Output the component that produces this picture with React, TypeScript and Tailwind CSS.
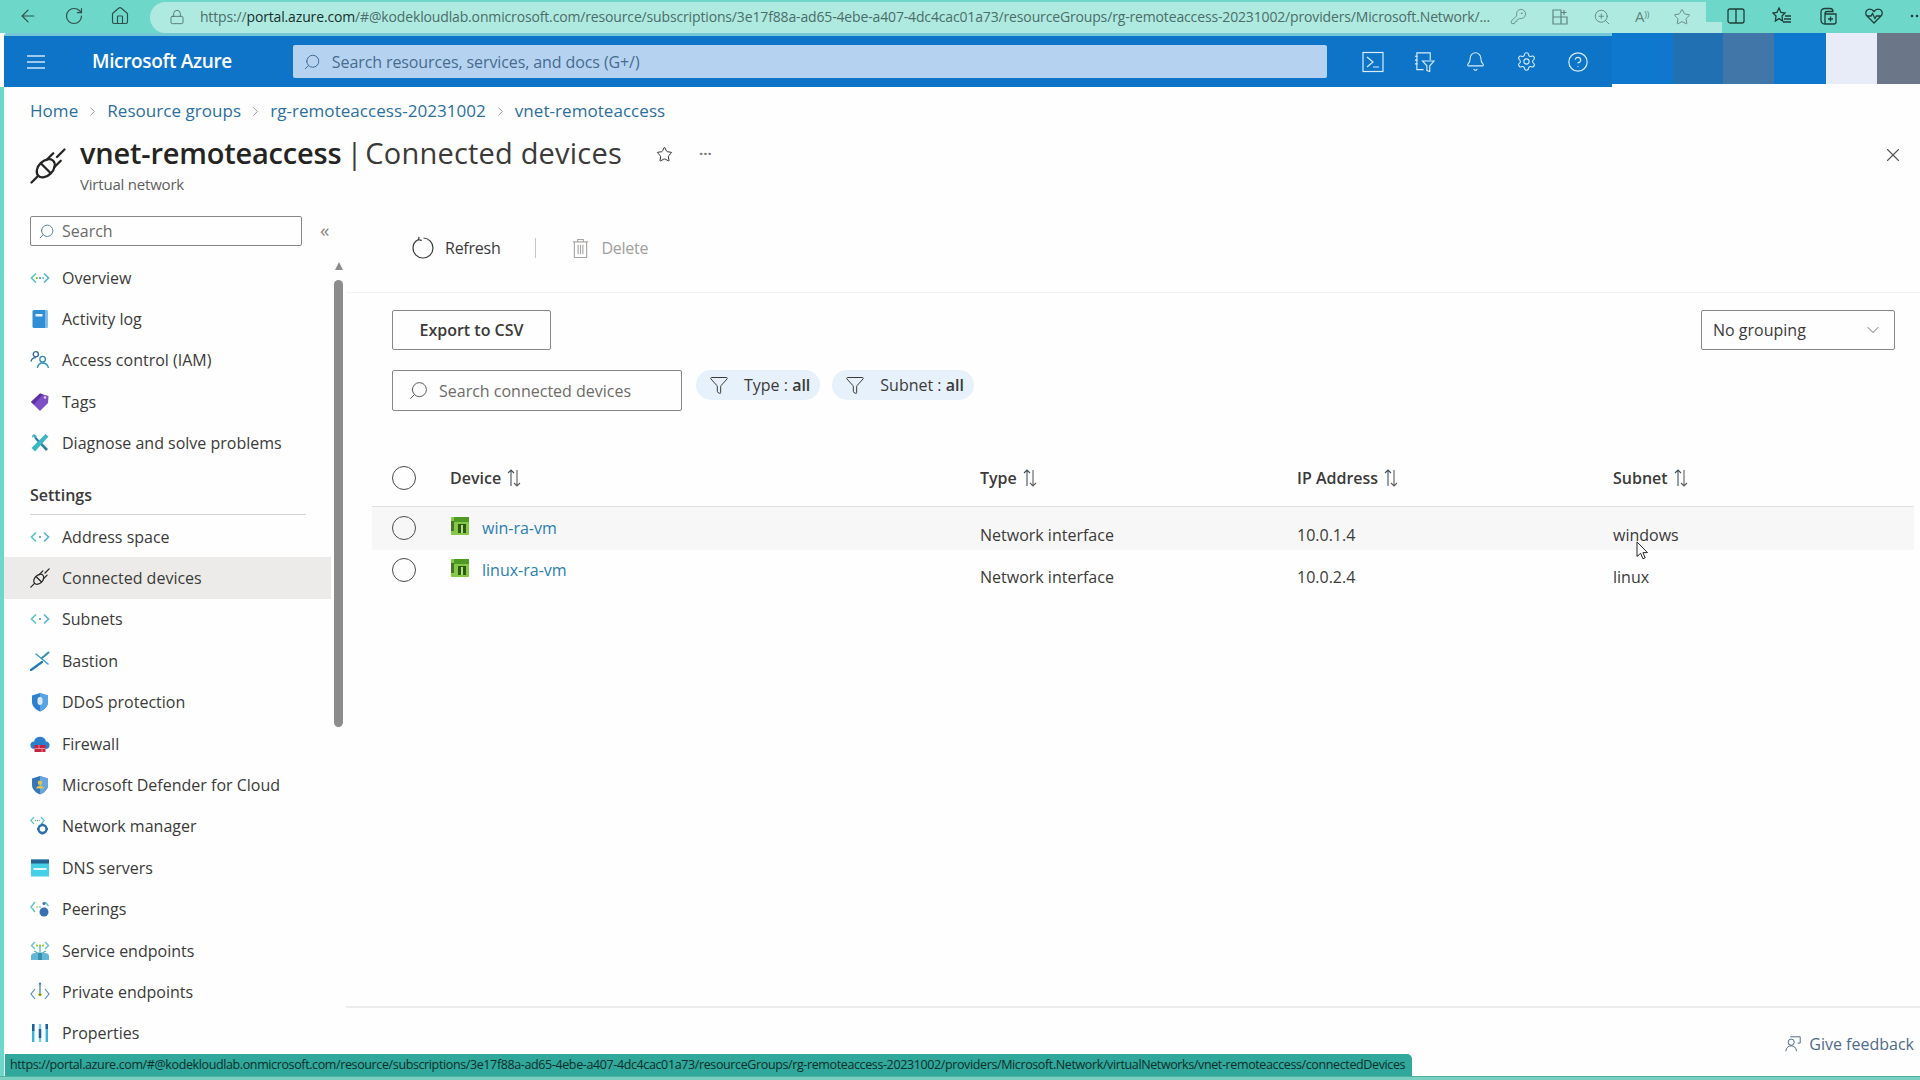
import React from "react";
import { ArrowLeft, RotateCw, Home, Lock, ChevronRight, X, ChevronDown, Star, ZoomIn, KeyRound, Bell, Settings, CircleHelp, Search, Funnel } from "lucide-react";

const Code = ({ dots = "three" }: { dots?: string }) => (
  <svg viewBox="0 0 20 20" className="w-[20px] h-[20px]">
    <path d="M6 5.500 1.500 10 6 14.500" fill="none" stroke="#5cc6c4" strokeWidth="1.700" />
    <path d="M14 5.500 18.500 10 14 14.500" fill="none" stroke="#5bb0d0" strokeWidth="1.700" />
    {dots === "three" && <circle cx="6.800" cy="10" r="1" fill="#7fba00" />}
    <circle cx="10" cy="10" r="1" fill="#3999c6" />
    {dots === "three" && <circle cx="13.200" cy="10" r="1" fill="#5cc6c4" />}
  </svg>
);
const Plug = ({ s = 20, w = 1.5 }: { s?: number; w?: number }) => (
  <svg viewBox="0 0 24 24" width={s} height={s} fill="none" stroke="#252423" strokeWidth={w} strokeLinecap="round">
    <path d="M1 23 5.500 18.500" />
    <ellipse cx="10.500" cy="13.500" rx="7" ry="4.800" transform="rotate(-45 10.500 13.500)" />
    <path d="M7.500 10.500 13.500 16.500" />
    <path d="M11 8 15.500 3.500M16 13 20.500 8.500" />
    <path d="M18 6 23 1" />
  </svg>
);
const Book = () => (
  <svg viewBox="0 0 20 20" className="w-[20px] h-[20px]">
    <rect x="2.500" y="1" width="15" height="18" rx="1.500" fill="#2f8fd5" />
    <rect x="15" y="1" width="2.500" height="18" fill="#7fb8e6" />
    <rect x="5.500" y="5" width="7" height="2.500" fill="#e8f3fb" />
  </svg>
);
const People = () => (
  <svg viewBox="0 0 20 20" className="w-[20px] h-[20px]" fill="none" strokeWidth="1.300">
    <circle cx="5.800" cy="4.200" r="2.600" stroke="#32659c" />
    <path d="M1 11.500C1.600 8.600 3.400 7.600 5.800 7.600" stroke="#32659c" />
    <circle cx="12.600" cy="9.200" r="2.800" stroke="#2f8fb5" />
    <path d="M7.400 18C8 14.600 10 13 12.600 13 15.200 13 17.600 14.600 18.500 18" stroke="#2f8fb5" />
  </svg>
);
const Tag = () => (
  <svg viewBox="0 0 20 20" className="w-[20px] h-[20px]">
    <path d="M1 10 10 1.500 18.500 4 18 11 10 19Z" fill="#7d4fc4" />
    <path d="M1 10 10 1.500 13 2.300 4 12.500Z" fill="#5e2ea3" />
    <circle cx="15" cy="5.500" r="1.200" fill="#e5d8f5" />
  </svg>
);
const Tools = () => (
  <svg viewBox="0 0 20 20" className="w-[20px] h-[20px]">
    <path d="M2 5C1.400 3 3 1 5 1.400L7 3.400 5 5.400 3 3.400Z" fill="#46b2c9" />
    <path d="M4.500 5.500 6 4 18 16 16 18Z" fill="#2d7f98" />
    <path d="M15.500 1 18.500 3.500 5 18.500 1.500 15Z" fill="#39b7c7" />
  </svg>
);
const Bastion = () => (
  <svg viewBox="0 0 20 20" className="w-[20px] h-[20px]" fill="none" strokeLinecap="round">
    <path d="M1 19 12 11" stroke="#2678b8" strokeWidth="2.200" />
    <path d="M6 3 18 13" stroke="#3d9fc7" strokeWidth="1.500" />
    <path d="M12 7 18.500 1.500" stroke="#2f8fb5" strokeWidth="2" />
  </svg>
);
const Shield = ({ inner = "#dceaf7" }: { inner?: string }) => (
  <svg viewBox="0 0 20 20" className="w-[20px] h-[20px]">
    <path d="M10 1 18 3.500V10C18 14.500 14 17.800 10 19.500 6 17.800 2 14.500 2 10V3.500Z" fill="#2e7fd0" />
    <path d="M10 1 18 3.500V10C18 14.500 14 17.800 10 19.500Z" fill="#59a5e4" />
    <rect x="7.500" y="5" width="5" height="8" rx="2.400" fill={inner} />
  </svg>
);
const Firewall = () => (
  <svg viewBox="0 0 20 20" className="w-[20px] h-[20px]">
    <path d="M4.500 15C2 15 .4 13.300 .4 11.200 .4 9.200 2 7.700 4 7.600 4.600 4.600 7 2.800 10 2.800 13 2.800 15.400 4.600 16 7.600 18 7.700 19.600 9.200 19.600 11.200 19.600 13.300 18 15 15.500 15Z" fill="#2c7fca" />
    <rect x="4.500" y="11" width="11" height="7" fill="#c4243f" />
    <path d="M4.500 14.500H15.500M9 11V14.500M12 14.500V18" stroke="#f2b8c1" strokeWidth=".7" />
  </svg>
);
const Defender = () => (
  <svg viewBox="0 0 20 20" className="w-[20px] h-[20px]">
    <path d="M10 1 18 3.500V10C18 14.500 14 17.800 10 19.500 6 17.800 2 14.500 2 10V3.500Z" fill="#3476b8" />
    <path d="M10 1 18 3.500V10C18 14.500 14 17.800 10 19.500Z" fill="#6aa6dc" />
    <circle cx="10" cy="7.800" r="2.200" fill="#e2c54d" />
    <path d="M6 13.500C6.600 11.400 8.200 10.500 10 10.500 11.800 10.500 13.400 11.400 14 13.500Z" fill="#e2c54d" />
  </svg>
);
const NetMgr = () => (
  <svg viewBox="0 0 20 20" className="w-[20px] h-[20px]">
    <path d="M4 1 .8 4.500 4 8M11 1 14.200 4.500 11 8" fill="none" stroke="#5cc6c4" strokeWidth="1.200" />
    <circle cx="5.500" cy="4.500" r=".7" fill="#7fba00" /><circle cx="7.500" cy="4.500" r=".7" fill="#3999c6" /><circle cx="9.500" cy="4.500" r=".7" fill="#5cc6c4" />
    <circle cx="12.500" cy="13" r="4" fill="none" stroke="#2c6fb5" strokeWidth="2.400" />
    <path d="M12.500 7.400V9M12.500 17V18.600M7 13H8.500M16.500 13H18" stroke="#2c6fb5" strokeWidth="2" />
  </svg>
);
const Dns = () => (
  <svg viewBox="0 0 20 20" className="w-[20px] h-[20px]">
    <rect x="1" y="1.500" width="18" height="17" fill="#45d0e6" />
    <rect x="1" y="1.500" width="18" height="4" fill="#25618f" />
    <rect x="3.500" y="10" width="13" height="2" fill="#e2f8fc" />
  </svg>
);
const Peer = () => (
  <svg viewBox="0 0 20 20" className="w-[20px] h-[20px]">
    <path d="M5 3 1 8 5 13M15 3 18.500 7" fill="none" stroke="#5cc6c4" strokeWidth="1.400" />
    <circle cx="7" cy="8" r=".8" fill="#7fba00" /><circle cx="10" cy="8" r=".8" fill="#3999c6" />
    <circle cx="14" cy="13" r="4.500" fill="#3a6fb0" />
    <circle cx="14" cy="4.500" r="1.500" fill="#3a6fb0" />
  </svg>
);
const Service = () => (
  <svg viewBox="0 0 20 20" className="w-[20px] h-[20px]">
    <path d="M5 1 1.500 4.500 5 8M15 1 18.500 4.500 15 8" fill="none" stroke="#5cc6c4" strokeWidth="1.300" />
    <circle cx="7" cy="4.500" r=".9" fill="#7fba00" /><circle cx="10" cy="4.500" r=".9" fill="#7fba00" /><circle cx="13" cy="4.500" r=".9" fill="#7fba00" />
    <path d="M10 5V12M4 10 10 13 16 10" fill="none" stroke="#4ab5bd" strokeWidth="1.300" />
    <path d="M1 15C1 13 3 12 5 12H15C17 12 19 13 19 15V19H1Z" fill="#62b6d6" />
    <rect x="8" y="12" width="4" height="7" fill="#3a8fb0" />
  </svg>
);
const Private = () => (
  <svg viewBox="0 0 20 20" className="w-[20px] h-[20px]">
    <path d="M5 7 1 12 5 17M15 7 19 12 15 17" fill="none" stroke="#4f8fb8" strokeWidth="1.200" />
    <path d="M10 2V11" stroke="#4f7fa8" strokeWidth="1.300" />
    <circle cx="10" cy="1.800" r="1.200" fill="#4f7fa8" />
    <circle cx="10" cy="12.500" r="1.600" fill="#7fa200" />
  </svg>
);
const Props = () => (
  <svg viewBox="0 0 20 20" className="w-[20px] h-[20px]">
    <rect x="2" y="1" width="2.400" height="18" fill="#37b5d8" />
    <rect x="2" y="1" width="2.400" height="7" fill="#1f5f9a" />
    <rect x="8.800" y="1" width="2.400" height="18" fill="#7cc8e4" />
    <rect x="8.800" y="6" width="2.400" height="9" fill="#1f5f9a" />
    <rect x="15.600" y="1" width="2.400" height="18" fill="#37b5d8" />
    <rect x="15.600" y="1" width="2.400" height="5" fill="#1f5f9a" />
  </svg>
);
const Vm = () => (
  <svg viewBox="0 0 20 20" className="w-[20px] h-[20px] -mt-[4px]">
    <rect x="1" y="1" width="18" height="18" rx="1" fill="#84c846" />
    <rect x="4" y="1" width="15" height="5" fill="#4f9a22" />
    <rect x="1" y="5" width="3" height="10" fill="#4a7528" />
    <rect x="8" y="8" width="8" height="9" fill="#2b5a12" />
    <rect x="11" y="9" width="2" height="8" fill="#b4e07c" />
  </svg>
);
const Sort = () => (
  <svg viewBox="0 0 14 18" className="w-[14px] h-[18px] ml-[6px]" fill="none" strokeWidth="1.100">
    <path d="M4 17V1M1 4 4 1 7 4" stroke="#43505c" />
    <path d="M10 1V17M7 14 10 17 13 14" stroke="#605e5c" />
  </svg>
);
const Ring = () => <span className="block w-[24px] h-[24px] rounded-full border-[1.5px] border-[#4a4a4a]" />;

const NavItem = ({ icon, label, active }: { icon: React.ReactNode; label: string; active?: boolean }) => (
  <div className={`flex h-[41.4px] items-center pl-[26px] gap-[12px] text-[16px] text-[#3b3a39] ${active ? "bg-[#edebe9]" : ""}`}>
    <span className="w-[20px] h-[20px] flex items-center justify-center shrink-0">{icon}</span>
    <span>{label}</span>
  </div>
);

const Crumb = ({ children }: { children: React.ReactNode }) => <span className="text-[#2a6f9e]">{children}</span>;
const Sep = () => <ChevronRight className="w-[15px] h-[15px] mx-[7px] text-[#777]" strokeWidth={1.2} />;

const Chip = ({ label }: { label: string }) => (
  <div className="h-[30px] rounded-full bg-[#e6f1fb] flex items-center pl-[13px] pr-[10px] text-[16px] text-[#3b3a39]">
    <Funnel className="w-[20px] h-[20px] mr-[15px] text-[#3b3a39]" strokeWidth={1.2} />
    <span>{label} : <span className="font-semibold">all</span></span>
  </div>
);

const Row = ({ name, ip, sub, hover }: { name: string; ip: string; sub: string; hover?: boolean }) => (
  <div className={`grid grid-cols-[58px_530px_317px_316px_1fr] pl-[20px] pb-[2px] items-center text-[16px] text-[#3b3a39] ${hover ? "bg-[#f7f7f7] h-[43px]" : "h-[41px]"}`}>
    <Ring />
    <div className="flex items-center gap-[12px]"><Vm /><span className="text-[#2a7fb0]">{name}</span></div>
    <div className="pt-[14px]">Network interface</div>
    <div className="pt-[14px]">{ip}</div>
    <div className="pt-[14px]">{sub}</div>
  </div>
);

export default function App() {
  const tip = "https://portal.azure.com/#@kodekloudlab.onmicrosoft.com/resource/subscriptions/3e17f88a-ad65-4ebe-a407-4dc4cac01a73/resourceGroups/rg-remoteaccess-20231002/providers/Microsoft.Network/virtualNetworks/vnet-remoteaccess/connectedDevices";
  return (
    <div className="relative w-[1920px] h-[1080px] overflow-hidden flex flex-col bg-[#6dd8c9] font-['Open_Sans',sans-serif]">
      {/* browser chrome */}
      <div className="h-[33px] flex shrink-0 items-end text-[#2f4f4a]">
        <div className="w-[150px] h-[33px] flex items-center pl-[18px] gap-[26px] pb-[2px]">
          <ArrowLeft className="w-[20px] h-[20px]" strokeWidth={1.4} />
          <RotateCw className="w-[20px] h-[20px]" strokeWidth={1.4} />
          <Home className="w-[20px] h-[20px]" strokeWidth={1.4} />
        </div>
        <div className="w-[1557px] h-[31px] rounded-l-full rounded-tr-[24px] bg-[#aeeae0] flex items-center pl-[19px] pb-[2px] text-[14px] text-[#4c6d68] tracking-[-0.15px]">
          <Lock className="w-[16px] h-[16px] mr-[15px]" strokeWidth={1.3} />
          <span className="w-[1295px] whitespace-nowrap overflow-hidden">https://<span className="text-[#16302c]">portal.azure.com</span>/#@kodekloudlab.onmicrosoft.com/resource/subscriptions/3e17f88a-ad65-4ebe-a407-4dc4cac01a73/resourceGroups/rg-remoteaccess-20231002/providers/Microsoft.Network/...</span>
          <div className="flex items-center gap-[24px] ml-[15px] text-[#5f8580]">
            <KeyRound className="w-[17px] h-[17px]" strokeWidth={1.2} />
            <svg viewBox="0 0 18 18" className="w-[18px] h-[18px]" fill="none" stroke="currentColor" strokeWidth="1.200"><path d="M2 2H10V16H2ZM2 9H16V16H10M13 2V7M10.500 4.500H15.500" /></svg>
            <ZoomIn className="w-[18px] h-[18px]" strokeWidth={1.2} />
            <span className="text-[15px] leading-none">A<sup className="text-[9px]">))</sup></span>
            <Star className="w-[18px] h-[18px]" strokeWidth={1.2} />
          </div>
        </div>
        <div className="w-[16px] h-[11px] bg-[#aeeae0]" />
        <div className="flex-1 h-[33px] flex items-center pl-[4px] gap-[26px] pb-[2px] text-[#1f3d39]">
          <svg viewBox="0 0 20 20" className="w-[20px] h-[20px] shrink-0" fill="none" stroke="currentColor" strokeWidth="1.300"><rect x="2" y="3" width="16" height="14" rx="2" /><path d="M10 3V17" /></svg>
          <svg viewBox="0 0 20 20" className="w-[20px] h-[20px] shrink-0" fill="none" stroke="currentColor" strokeWidth="1.300"><path d="M7 2 9 6.500 13 7 10 10 10.600 15 7 12.600 3.400 15 4 10 1 7 5 6.500ZM13 10H19M12 13H19M11 16H19" /></svg>
          <svg viewBox="0 0 20 20" className="w-[20px] h-[20px] shrink-0" fill="none" stroke="currentColor" strokeWidth="1.300"><path d="M7 18C4 18 3 16 3 14V6C3 4 4.500 2.500 7 2.500H12C14 2.500 15 4 15 5.500H9C7 5.500 7 7 7 8V18H16C17 18 18 17 18 16V8H7M12.500 10.500V15.500M10 13H15" /></svg>
          <svg viewBox="0 0 20 20" className="w-[20px] h-[20px] shrink-0" fill="none" stroke="currentColor" strokeWidth="1.300"><path d="M10 17 3 10C1 8 1.500 4.500 4 3.500 6.500 2.500 8.500 3.500 10 5.500 11.500 3.500 13.500 2.500 16 3.500 18.500 4.500 19 8 17 10ZM3 10H7L8.500 7.500 11 12.500 12.500 10H17" /></svg>
          <svg viewBox="0 0 10 4" className="w-[10px] h-[4px] shrink-0" fill="currentColor"><circle cx="2" cy="2" r="1.300" /><circle cx="7" cy="2" r="1.300" /></svg>
        </div>
      </div>

      {/* portal */}
      <div className="flex-1 min-h-0 ml-[4px] flex flex-col bg-[#fefefe]">
        <div className="h-[54px] flex shrink-0 bg-[#fefefe] -ml-[4px] items-start">
          <div className="ml-[4px] w-[1608px] h-[54px] bg-[#0e74c8] border-t-[3px] border-[#74c8d6] flex items-center text-white rounded-tl-[3px]">
            <svg viewBox="0 0 20 16" className="w-[20px] h-[16px] ml-[22px]" fill="none" stroke="#cfe5f7" strokeWidth="1.400"><path d="M1 2H19M1 8H19M1 14H19" /></svg>
            <span className="ml-[46px] text-[19px] font-semibold tracking-[-0.35px] -mt-[1px]">Microsoft Azure</span>
            <div className="ml-[61px] w-[1034px] h-[33px] rounded-[2px] bg-[#b5d3f1] flex items-center pl-[10px] text-[16px] text-[#476b8f]">
              <Search className="w-[18px] h-[18px] -scale-x-100 mr-[11px] text-[#3f6a94]" strokeWidth={1.3} />
              <span className="tracking-[-0.1px]">Search resources, services, and docs (G+/)</span>
            </div>
            <div className="flex items-center ml-[35px] gap-[30px] text-[#d8ecfb]">
              <svg viewBox="0 0 22 22" className="w-[22px] h-[22px]" fill="none" stroke="currentColor" strokeWidth="1.200"><rect x="1" y="1.500" width="20" height="19" /><path d="M5 6 11 11 5 16M11 16H17" /></svg>
              <svg viewBox="0 0 22 22" className="w-[21px] h-[22px]" fill="none" stroke="currentColor" strokeWidth="1.200"><path d="M3 5V19H10M3 5V1.500H17V9M1 5H4M1 9H4M1 13H4M9 10H21L16.500 15V21L13.500 20V15Z" /></svg>
              <Bell className="w-[21px] h-[21px]" strokeWidth={1.2} />
              <Settings className="w-[21px] h-[21px]" strokeWidth={1.2} />
              <CircleHelp className="w-[22px] h-[22px]" strokeWidth={1.3} />
            </div>
          </div>
          <div className="w-[308px] h-[51px] flex">
            <div className="w-[61px] bg-[#0e78cf]" />
            <div className="w-[50px] bg-[#2170b2]" />
            <div className="w-[51px] bg-[#4076a8]" />
            <div className="w-[52px] bg-[#0e78cf]" />
            <div className="w-[51px] bg-[#e8ebf8]" />
            <div className="flex-1 bg-[#6b7688]" />
          </div>
        </div>

        {/* blade header */}
        <div className="h-[113px] shrink-0 pl-[26px] pr-[16px]">
          <div className="h-[46px] flex items-center text-[17px] tracking-[0.05px] pt-[2px]">
            <Crumb>Home</Crumb><Sep /><Crumb>Resource groups</Crumb><Sep /><Crumb>rg-remoteaccess-20231002</Crumb><Sep /><Crumb>vnet-remoteaccess</Crumb>
          </div>
          <div className="flex items-start">
            <div className="mt-[15px] mr-[14px]"><Plug s={36} w={1.5} /></div>
            <div className="flex-1 -mt-[2px]">
              <div className="flex items-center h-[44px]">
                <span className="text-[29px] text-[#252423] font-semibold tracking-[-0.2px]">vnet-remoteaccess</span>
                <span className="text-[29px] text-[#3b3a39] ml-[5px]">|</span>
                <span className="text-[29px] text-[#3b3a39] ml-[3px] tracking-[0.2px]">Connected devices</span>
                <Star className="w-[17px] h-[17px] ml-[34px] mt-[2px] text-[#323130]" strokeWidth={1.4} />
                <span className="ml-[26px] text-[#777] text-[15px] font-bold">···</span>
                <X className="w-[22px] h-[22px] ml-auto mt-[3px] text-[#555]" strokeWidth={1.2} />
              </div>
              <div className="text-[15px] text-[#605e5c] -mt-[2px] tracking-[-0.2px]">Virtual network</div>
            </div>
          </div>
        </div>

        <div className="flex-1 min-h-0 flex">
          {/* sidebar */}
          <div className="w-[342px] shrink-0 flex overflow-hidden">
            <div className="w-[327px] shrink-0">
              <div className="h-[57px] pt-[16px] pl-[26px] flex items-start">
                <div className="w-[272px] h-[30px] border border-[#8a8886] rounded-[2px] flex items-center pl-[7px] text-[16px] text-[#6d6b69]">
                  <Search className="w-[17px] h-[17px] -scale-x-100 mr-[7px] text-[#4a7d9d]" strokeWidth={1.3} />Search
                </div>
                <span className="ml-[18px] mt-[1px] text-[19px] leading-[26px] text-[#8a8886]">«</span>
              </div>
              <NavItem icon={<Code />} label="Overview" />
              <NavItem icon={<Book />} label="Activity log" />
              <NavItem icon={<People />} label="Access control (IAM)" />
              <NavItem icon={<Tag />} label="Tags" />
              <NavItem icon={<Tools />} label="Diagnose and solve problems" />
              <div className="ml-[26px] mr-[25px] h-[51px] border-b border-[#d5d3d1] pt-[19px] text-[16px] font-semibold text-[#3b3a39]">Settings</div>
              <div className="h-[1px]" />
              <NavItem icon={<Code dots="one" />} label="Address space" />
              <NavItem icon={<Plug s={20} />} label="Connected devices" active />
              <NavItem icon={<Code dots="one" />} label="Subnets" />
              <NavItem icon={<Bastion />} label="Bastion" />
              <NavItem icon={<Shield />} label="DDoS protection" />
              <NavItem icon={<Firewall />} label="Firewall" />
              <NavItem icon={<Defender />} label="Microsoft Defender for Cloud" />
              <NavItem icon={<NetMgr />} label="Network manager" />
              <NavItem icon={<Dns />} label="DNS servers" />
              <NavItem icon={<Peer />} label="Peerings" />
              <NavItem icon={<Service />} label="Service endpoints" />
              <NavItem icon={<Private />} label="Private endpoints" />
              <NavItem icon={<Props />} label="Properties" />
            </div>
            <div className="w-[9px] ml-[3px] pt-[62px]">
              <div className="w-0 h-0 mx-auto border-l-[4.5px] border-r-[4.5px] border-b-[8px] border-l-transparent border-r-transparent border-b-[#8c8c8c]" />
              <div className="mt-[10px] w-[9px] h-[447px] rounded-full bg-[#8c8c8c]" />
            </div>
          </div>

          {/* content */}
          <div className="flex-1 min-w-0 flex flex-col">
            <div className="h-[93px] shrink-0 border-b border-[#f3f2f1] pl-[65px] pt-[33px]">
              <div className="h-[30px] flex items-center text-[16px] tracking-[-0.25px]">
                <svg viewBox="0 0 24 24" className="w-[24px] h-[24px] mr-[10px]" fill="none" stroke="#3b3a39" strokeWidth="1.200"><path d="M7.500 3.500C3.800 5.200 2 8.500 2 12 2 17.500 6.500 22 12 22 17.500 22 22 17.500 22 12 22 6.800 18 2.300 12.500 2" /><path d="M8 .8 7.600 3.800 10.800 4.400" /></svg>
                <span className="text-[#3b3a39]">Refresh</span>
                <div className="w-px h-[20px] bg-[#c8c6c4] ml-[35px] mr-[36px]" />
                <svg viewBox="0 0 18 22" className="w-[17px] h-[21px] mr-[12px]" fill="none" stroke="#a8a6a4" strokeWidth="1.200"><path d="M1 4H17M6 4V1.500H12V4M2.500 4V20.500H15.500V4M6.500 7V17M9 7V17M11.500 7V17" /></svg>
                <span className="text-[#a19f9d]">Delete</span>
              </div>
            </div>
            <div className="flex-1 min-h-0 flex flex-col">
              <div className="mt-[17px] pl-[46px] pr-[25px] flex justify-between items-center">
                <div className="w-[159px] h-[40px] border border-[#8a8886] rounded-[2px] flex items-center justify-center text-[16px] font-semibold text-[#3b3a39]">Export to CSV</div>
                <div className="w-[194px] h-[40px] border border-[#8a8886] rounded-[2px] flex items-center justify-between pl-[11px] pr-[11px] text-[16px] text-[#3b3a39]">
                  No grouping<ChevronDown className="w-[20px] h-[20px] text-[#605e5c]" strokeWidth={1.1} />
                </div>
              </div>
              <div className="mt-[20px] pl-[46px] flex items-start gap-[14px]">
                <div className="w-[290px] h-[41px] border border-[#8a8886] rounded-[2px] flex items-center pl-[15px] text-[16px] text-[#6d6b69]">
                  <Search className="w-[21px] h-[21px] -scale-x-100 mr-[10px] text-[#555]" strokeWidth={1.1} />Search connected devices
                </div>
                <Chip label="Type" />
                <div className="-ml-[2px]"><Chip label="Subnet" /></div>
              </div>
              <div className="mt-[44px] ml-[26px] mr-[6px]">
                <div className="grid grid-cols-[58px_530px_317px_316px_1fr] pl-[20px] h-[52px] pb-[5px] items-center border-b border-[#e1dfdd] text-[16px] font-semibold text-[#3b3a39]">
                  <Ring />
                  <div className="flex items-center">Device<Sort /></div>
                  <div className="flex items-center">Type<Sort /></div>
                  <div className="flex items-center">IP Address<Sort /></div>
                  <div className="flex items-center">Subnet<Sort /></div>
                </div>
                <Row name="win-ra-vm" ip="10.0.1.4" sub="windows" hover />
                <Row name="linux-ra-vm" ip="10.0.2.4" sub="linux" />
              </div>
            </div>
            <div className="h-[70px] shrink-0 border-t-[2px] border-[#ececec] flex justify-end pr-[6px] pt-[24px] text-[16px] text-[#4e6b8c]">
              <div className="flex items-center h-[24px] gap-[7px]">
                <svg viewBox="0 0 20 20" className="w-[18px] h-[18px]" fill="none" stroke="#4e6b8c" strokeWidth="1.100"><circle cx="8" cy="8" r="3.400" /><path d="M2 18C2.500 14 5 12 8 12 11 12 13.500 14 14 18M7 2H18V9H15" /></svg>
                Give feedback
              </div>
            </div>
          </div>
        </div>
      </div>
      <div className="h-[4px] shrink-0 bg-[#79d0c0] border-t border-[#4fb0a2]" />

      {/* status tooltip */}
      <div className="absolute left-[5px] bottom-[4px] w-[1407px] h-[22px] rounded-tr-[5px] bg-[#30a89b] flex items-center pl-[5px] text-[12.5px] tracking-[-0.38px] text-[#0f2f2b] whitespace-nowrap">{tip}</div>

      {/* mouse pointer */}
      <svg viewBox="0 0 14 22" className="absolute left-[1635px] top-[541px] w-[14px] h-[20px]">
        <path d="M1.500 1V17L5.500 13.500 8 19.500 10.500 18.500 8 12.800H13Z" fill="#fff" stroke="#111" strokeWidth="1" />
      </svg>
    </div>
  );
}
